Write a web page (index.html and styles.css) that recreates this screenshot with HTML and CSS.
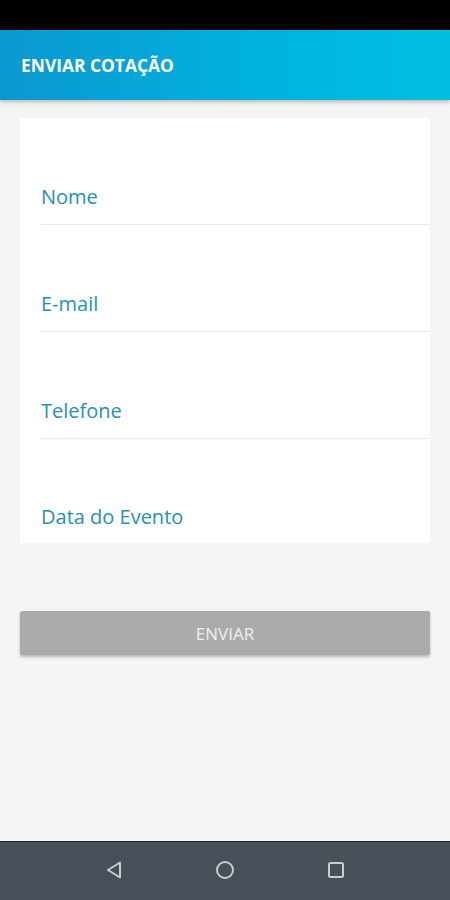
FILE: index.html
```html
<!DOCTYPE html>
<html>
<head>
  <title>Enviar Cotação</title>
  <link rel="stylesheet" href="styles.css">
</head>
<body>
  <div class="statusbar"></div>
  <div class="appbar">
    <h1>ENVIAR COTAÇÃO</h1>
  </div>
  <div class="content">
    <form class="card" id="quoteForm">
      <div class="field"><label>Nome</label></div>
      <div class="field"><label>E-mail</label></div>
      <div class="field"><label>Telefone</label></div>
      <div class="field last"><label>Data do Evento</label></div>
    </form>
    <button class="send" type="button">ENVIAR</button>
  </div>
  <div class="navbar">
    <svg width="20" height="20" viewBox="0 0 20 20">
      <path d="M16 2.5 L4 10 L16 17.5 Z" fill="none" stroke="#c9ccd0" stroke-width="2" stroke-linejoin="round"/>
    </svg>
    <svg width="20" height="20" viewBox="0 0 20 20">
      <circle cx="10" cy="10" r="8" fill="none" stroke="#c9ccd0" stroke-width="2"/>
    </svg>
    <svg width="20" height="20" viewBox="0 0 20 20">
      <rect x="3" y="3" width="14" height="14" rx="1.5" fill="none" stroke="#c9ccd0" stroke-width="2"/>
    </svg>
  </div>
</body>
</html>
```
FILE: styles.css
```css
body {
  margin: 0;
  padding: 0;
  height: 900px;
  display: flex;
  flex-direction: column;
  background-color: #f5f5f5;
  font-family: "Open Sans", sans-serif;
}

.statusbar {
  height: 30px;
  background-color: #000;
}

.appbar {
  height: 70px;
  display: flex;
  align-items: center;
  padding-left: 21px;
  background: linear-gradient(to right, #0b98cf, #00b3df 60%, #00bfe2);
  box-shadow: 0 2px 4px rgba(0, 0, 0, 0.25);
  position: relative;
  z-index: 1;
}

.appbar h1 {
  margin: 0;
  font-size: 17.4px;
  font-weight: bold;
  color: #fff;
}

.content {
  flex: 1;
  padding: 18px 20px 0 20px;
}

.card {
  margin: 0;
  background-color: #fff;
  padding-left: 21px;
}

.field {
  height: 106px;
  display: flex;
  align-items: flex-end;
  border-bottom: 1px solid #e9e9e9;
}

.field.last {
  height: 104px;
  border-bottom: none;
}

.field label {
  font-size: 20px;
  line-height: 22px;
  color: #2592b2;
  margin-bottom: 16px;
}

.field.last label {
  margin-bottom: 15px;
}

.send {
  display: block;
  width: 100%;
  height: 44px;
  margin-top: 68px;
  border: none;
  border-radius: 2px;
  background-color: #ababab;
  color: #f0f0f0;
  font-family: "Open Sans", sans-serif;
  font-size: 17px;
  box-shadow: 0 2px 3px rgba(0, 0, 0, 0.25);
}

.navbar {
  height: 56px;
  border-top: 1px solid #1e2430;
  background-color: #474f59;
  display: flex;
  justify-content: center;
  align-items: center;
  gap: 91px;
  padding-bottom: 2px;
}
```
